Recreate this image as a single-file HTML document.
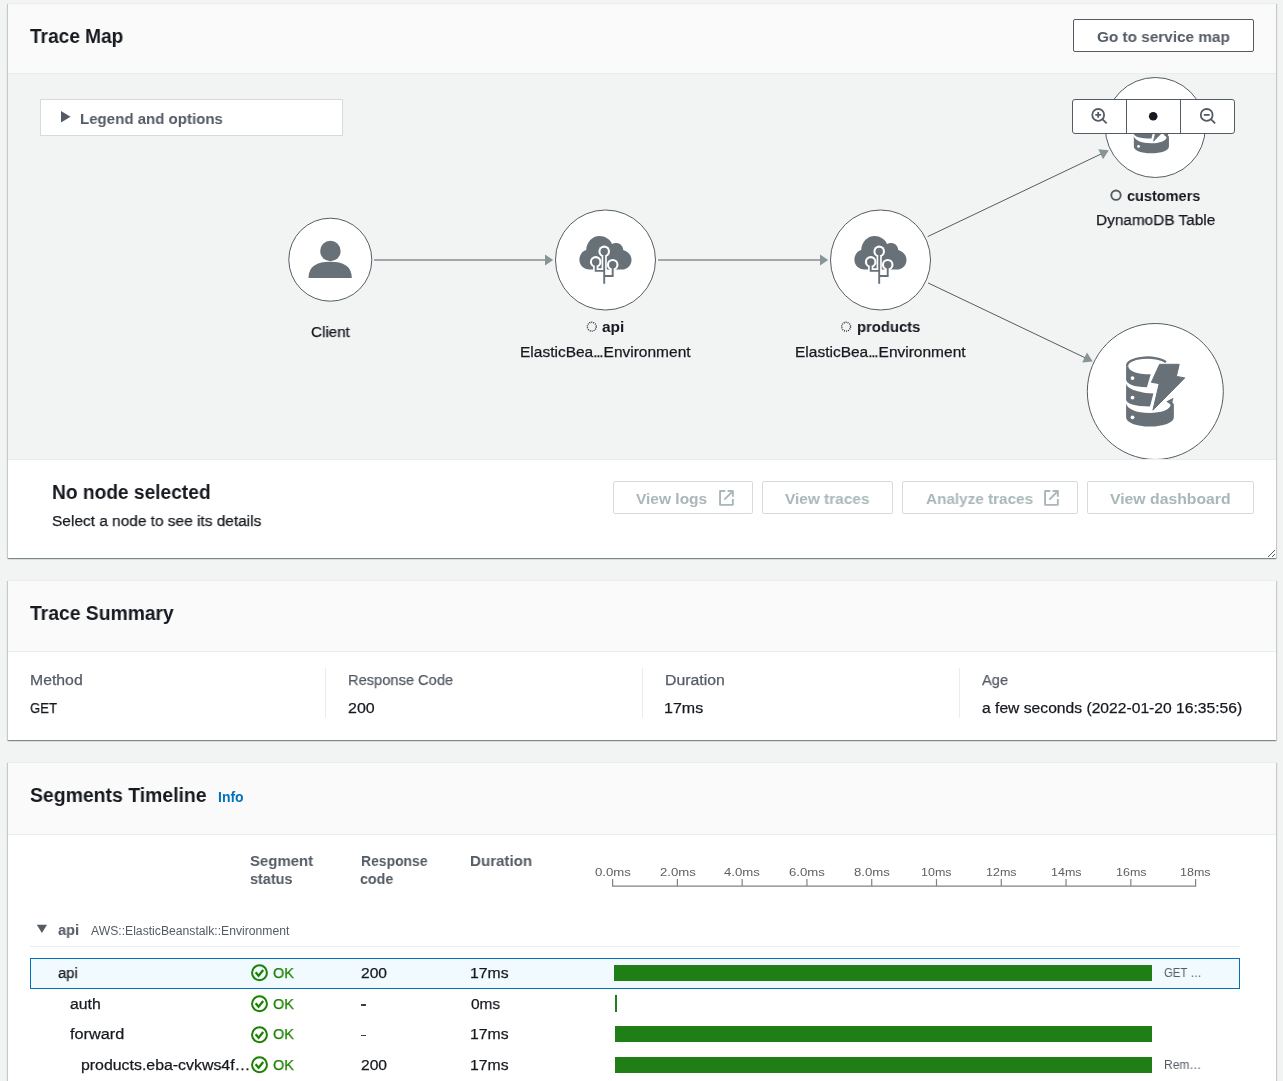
<!DOCTYPE html>
<html><head><meta charset="utf-8"><style>
html,body{margin:0;padding:0;}
body{width:1283px;height:1081px;overflow:hidden;position:relative;background:#f2f3f3;font-family:"Liberation Sans", sans-serif;}
.t{position:absolute;white-space:nowrap;line-height:0;will-change:transform;}
</style></head><body>
<div style="position:absolute;left:8px;top:3px;width:1268px;height:555px;background:#fff;box-sizing:border-box;box-shadow:0 1px 1px 0 rgba(0,28,36,.3),1px 1px 1px 0 rgba(0,28,36,.15),-1px 1px 1px 0 rgba(0,28,36,.15);border-top:1px solid #eaeded;"></div>
<div style="position:absolute;left:8px;top:4px;width:1268px;height:69px;background:#fafafa;border-bottom:1px solid #eaeded;"></div>
<div style="position:absolute;left:8px;top:74px;width:1268px;height:385px;background:#f2f3f3;"></div>
<div style="position:absolute;left:8px;top:459px;width:1268px;height:1px;background:#eaeded;"></div>
<div class="t" style="left:30.10px;top:35.90px;font-size:20px;font-weight:700;color:#16191f;transform:scaleX(0.9541);transform-origin:0 0;">Trace Map</div>
<div style="position:absolute;left:1073px;top:19px;width:181px;height:33px;box-sizing:border-box;border:1px solid #545b64;border-radius:2px;background:#fff;"></div>
<div class="t" style="left:1096.60px;top:37.30px;font-size:15.5px;font-weight:700;color:#545b64;transform:scaleX(0.9881);transform-origin:0 0;">Go to service map</div>
<div style="position:absolute;left:40px;top:99px;width:303px;height:37px;box-sizing:border-box;border:1px solid #d5dbdb;background:#fff;"></div>
<svg style="position:absolute;left:0;top:0" width="1283" height="1081"><path d="M61 111 L70.5 116.8 L61 122.6 Z" fill="#545b64"/></svg>
<div class="t" style="left:80.40px;top:118.80px;font-size:15.5px;font-weight:700;color:#545b64;transform:scaleX(0.9701);transform-origin:0 0;">Legend and options</div>
<svg style="position:absolute;left:0;top:0;overflow:hidden" width="1283" height="1081"><defs><g id="eb"><path fill="#687078" d="M14.6,37.6 C8.8,37.6 4.4,33.2 4.4,27.8 C4.4,22.8 7.6,19 11.2,18 C11.6,10.4 17.2,4.1 24.5,4.1 C30,4.1 34.8,7.2 37,11.9 C38.4,11.2 40,10.9 41.6,11 C45.4,11.2 48,14.2 48.2,18 C52.8,19.2 56.5,23 56.5,28 C56.5,33.4 52.2,37.6 47,37.6 Z"/><g fill="none" stroke="#fff" stroke-width="5.2" stroke-linejoin="miter"><path d="M29.2,19.4 V52"/><path d="M20.7,29.9 V38.9 H29.2"/><path d="M37.7,32.7 V44 H29.2"/></g><g fill="#fff"><circle cx="29.2" cy="19.4" r="5.8"/><circle cx="20.7" cy="29.9" r="5.8"/><circle cx="37.7" cy="32.7" r="5.8"/></g><g fill="none" stroke="#687078" stroke-width="1.9"><path d="M29.2,19.4 V51.8"/><path d="M20.7,29.9 V38.9 H29.2"/><path d="M37.7,32.7 V44 H29.2"/></g><g fill="#687078"><circle cx="29.2" cy="19.4" r="3.7"/><circle cx="20.7" cy="29.9" r="3.7"/><circle cx="37.7" cy="32.7" r="3.7"/></g></g><g id="ddb" fill="#687078"><path fill="none" stroke="#687078" stroke-width="2.3" d="M7.25,16.2 A20.25,7.85 0 0 1 45.9,12.2"/><path d="M6.1,16.2 L6.1,29.5 C6.1,33.8 14,37.2 26.9,37.2 L30.7,24.3 C16,24.3 8.4,20.8 8.4,16.2 Z"/><path d="M6.1,33.4 L6.1,49.5 C6.1,53.6 14.5,56.5 30,56.5 L33.4,43.6 C12,42 6.5,36.5 6.1,33.4 Z"/><path d="M6.1,53.2 C7,58.8 16,63 29.6,63 C41.1,63 50.5,59.4 50.5,55 C50.6,54 51.2,53 51.9,52.2 C52.9,52.6 53.85,53.6 53.85,55 L53.85,67.3 C53.85,72.8 43.3,76.6 29.9,76.6 C16.5,76.6 6.1,72.8 6.1,67.3 Z"/><path d="M46.3,51.5 L53.5,47.8 L51.6,55.2 Z"/><path stroke="#687078" stroke-width="1" stroke-linejoin="round" d="M39.6,14.3 L59.2,14.3 L56.4,26.4 L64.8,27.9 L32.9,60.2 L39.2,33.6 L31.4,32.3 Z"/><g fill="#fff"><circle cx="12.5" cy="28.1" r="1.9"/><circle cx="12.5" cy="47.6" r="1.9"/><circle cx="12.5" cy="67.3" r="1.9"/></g></g></defs><g><path d="M374,260 H546" stroke="#545b64" stroke-width="1" fill="none"/><path d="M545,254.4 L553.2,260 L545,265.6 Z" fill="#879596"/><path d="M658,260 H821" stroke="#545b64" stroke-width="1" fill="none"/><path d="M820,254.4 L828.2,260 L820,265.6 Z" fill="#879596"/><path d="M927.70,236.60 L1101.58,153.74" stroke="#545b64" stroke-width="1" fill="none"/><path d="M1108.80,150.30 L1103.04,159.14 L1098.31,149.21 Z" fill="#879596"/><path d="M928.00,282.90 L1085.48,357.96" stroke="#545b64" stroke-width="1" fill="none"/><path d="M1092.70,361.40 L1082.21,362.49 L1086.94,352.56 Z" fill="#879596"/><circle cx="330.3" cy="259.7" r="41.5" fill="#fff" stroke="#545b64" stroke-width="1"/><circle cx="330.4" cy="251" r="10.2" fill="#687078"/><path d="M308.5,278 C308.5,266 317,261.7 330.2,261.7 C343.4,261.7 351.8,266 351.8,278 Z" fill="#687078"/><circle cx="605.5" cy="260" r="50" fill="#fff" stroke="#545b64" stroke-width="1"/><use href="#eb" x="575" y="232"/><circle cx="880.5" cy="260" r="50" fill="#fff" stroke="#545b64" stroke-width="1"/><use href="#eb" x="850" y="232"/><circle cx="1155.3" cy="127.5" r="50" fill="#fff" stroke="#545b64" stroke-width="1"/><g transform="translate(1129.35,97) scale(0.735)"><use href="#ddb"/></g></g><clipPath id="mapclip"><rect x="0" y="74" width="1283" height="385"/></clipPath><g clip-path="url(#mapclip)"><circle cx="1155.3" cy="391.5" r="68" fill="#fff" stroke="#545b64" stroke-width="1"/><use href="#ddb" x="1120" y="350"/></g><circle cx="591.8" cy="326.7" r="4.45" fill="none" stroke="#16191f" stroke-width="1.35" stroke-dasharray="0.9 1.1"/><circle cx="846.1" cy="326.7" r="4.45" fill="none" stroke="#16191f" stroke-width="1.35" stroke-dasharray="0.9 1.1"/><circle cx="1116" cy="195.2" r="4.7" fill="none" stroke="#545b64" stroke-width="1.9"/></svg>
<div class="t" style="left:310.80px;top:331.70px;font-size:15.5px;font-weight:400;color:#16191f;transform:scaleX(0.9800);transform-origin:0 0;-webkit-text-stroke:0.25px currentColor;">Client</div>
<div class="t" style="left:602.10px;top:326.90px;font-size:15.5px;font-weight:700;color:#16191f;transform:scaleX(0.9818);transform-origin:0 0;">api</div>
<div class="t" style="left:520.40px;top:352.10px;font-size:15.5px;font-weight:400;color:#16191f;-webkit-text-stroke:0.25px currentColor;">ElasticBea<span style='letter-spacing:-1.3px'>..</span>.Environment</div>
<div class="t" style="left:856.80px;top:327.30px;font-size:15.5px;font-weight:700;color:#16191f;transform:scaleX(0.9545);transform-origin:0 0;">products</div>
<div class="t" style="left:795.40px;top:352.10px;font-size:15.5px;font-weight:400;color:#16191f;-webkit-text-stroke:0.25px currentColor;">ElasticBea<span style='letter-spacing:-1.3px'>..</span>.Environment</div>
<div class="t" style="left:1126.80px;top:195.80px;font-size:15.5px;font-weight:700;color:#16191f;transform:scaleX(0.9359);transform-origin:0 0;">customers</div>
<div class="t" style="left:1096.10px;top:219.80px;font-size:15.5px;font-weight:400;color:#16191f;transform:scaleX(0.9908);transform-origin:0 0;-webkit-text-stroke:0.25px currentColor;">DynamoDB Table</div>
<div style="position:absolute;left:1072px;top:99px;width:163px;height:35px;box-sizing:border-box;border:1px solid #545b64;border-radius:3px;background:#fff;"></div>
<div style="position:absolute;left:1126px;top:99px;width:1px;height:35px;background:#545b64;"></div>
<div style="position:absolute;left:1180px;top:99px;width:1px;height:35px;background:#545b64;"></div>
<svg style="position:absolute;left:0;top:0" width="1283" height="1081"><g fill="none" stroke="#545b64" stroke-width="1.8"><circle cx="1098.2" cy="114.9" r="5.9"/><path d="M1102.4,119.1 L1106.6,123.3"/><path d="M1095.3,114.9 H1101.1 M1098.2,112 V117.8"/><circle cx="1206.7" cy="114.9" r="5.9"/><path d="M1210.9,119.1 L1215.1,123.3"/><path d="M1203.8,114.9 H1209.6"/></g><circle cx="1153.2" cy="116.3" r="4.3" fill="#16191f"/></svg>
<div class="t" style="left:52.30px;top:491.80px;font-size:20px;font-weight:700;color:#16191f;transform:scaleX(0.9576);transform-origin:0 0;">No node selected</div>
<div class="t" style="left:52.30px;top:520.70px;font-size:15.5px;font-weight:400;color:#16191f;transform:scaleX(0.9957);transform-origin:0 0;-webkit-text-stroke:0.25px currentColor;">Select a node to see its details</div>
<div style="position:absolute;left:613px;top:481px;width:140px;height:33px;box-sizing:border-box;border:1px solid #d5dbdb;border-radius:2px;background:#fff;"></div>
<div class="t" style="left:636.20px;top:498.80px;font-size:15.5px;font-weight:700;color:#aab7b8;">View logs</div>
<div style="position:absolute;left:762px;top:481px;width:131px;height:33px;box-sizing:border-box;border:1px solid #d5dbdb;border-radius:2px;background:#fff;"></div>
<div class="t" style="left:785.20px;top:498.80px;font-size:15.5px;font-weight:700;color:#aab7b8;transform:scaleX(0.9929);transform-origin:0 0;">View traces</div>
<div style="position:absolute;left:902px;top:481px;width:176px;height:33px;box-sizing:border-box;border:1px solid #d5dbdb;border-radius:2px;background:#fff;"></div>
<div class="t" style="left:925.50px;top:498.80px;font-size:15.5px;font-weight:700;color:#aab7b8;transform:scaleX(0.9862);transform-origin:0 0;">Analyze traces</div>
<div style="position:absolute;left:1087px;top:481px;width:167px;height:33px;box-sizing:border-box;border:1px solid #d5dbdb;border-radius:2px;background:#fff;"></div>
<div class="t" style="left:1110.00px;top:498.80px;font-size:15.5px;font-weight:700;color:#aab7b8;transform:scaleX(1.0169);transform-origin:0 0;">View dashboard</div>
<svg style="position:absolute;left:719px;top:490px" width="16" height="16" viewBox="0 0 16 16"><g fill="none" stroke="#aab7b8" stroke-width="1.9" stroke-linejoin="round"><path d="M6.3,1.05 H1.05 V14.85 H13.85 V9"/><path d="M8.6,1.05 H13.85 V6.7"/><path d="M13.6,1.3 L5.3,9.6"/></g></svg>
<svg style="position:absolute;left:1044px;top:490px" width="16" height="16" viewBox="0 0 16 16"><g fill="none" stroke="#aab7b8" stroke-width="1.9" stroke-linejoin="round"><path d="M6.3,1.05 H1.05 V14.85 H13.85 V9"/><path d="M8.6,1.05 H13.85 V6.7"/><path d="M13.6,1.3 L5.3,9.6"/></g></svg>
<svg style="position:absolute;left:1264px;top:546px" width="12" height="12"><g stroke="#545b64" stroke-width="1"><path d="M4,11 L11,4"/><path d="M8,11 L11,8"/></g></svg>
<div style="position:absolute;left:8px;top:580px;width:1268px;height:160px;background:#fff;box-sizing:border-box;box-shadow:0 1px 1px 0 rgba(0,28,36,.3),1px 1px 1px 0 rgba(0,28,36,.15),-1px 1px 1px 0 rgba(0,28,36,.15);border-top:1px solid #eaeded;"></div>
<div style="position:absolute;left:8px;top:581px;width:1268px;height:71px;background:#fafafa;border-bottom:1px solid #eaeded;box-sizing:border-box;"></div>
<div class="t" style="left:30.10px;top:613.20px;font-size:20px;font-weight:700;color:#16191f;transform:scaleX(0.9651);transform-origin:0 0;">Trace Summary</div>
<div class="t" style="left:30.10px;top:680.00px;font-size:15.5px;font-weight:400;color:#545b64;transform:scaleX(1.0192);transform-origin:0 0;-webkit-text-stroke:0.25px currentColor;">Method</div>
<div class="t" style="left:30.10px;top:708.00px;font-size:15.5px;font-weight:400;color:#16191f;transform:scaleX(0.8469);transform-origin:0 0;-webkit-text-stroke:0.25px currentColor;">GET</div>
<div class="t" style="left:347.70px;top:680.00px;font-size:15.5px;font-weight:400;color:#545b64;transform:scaleX(0.9459);transform-origin:0 0;-webkit-text-stroke:0.25px currentColor;">Response Code</div>
<div class="t" style="left:347.70px;top:708.00px;font-size:15.5px;font-weight:400;color:#16191f;transform:scaleX(1.0308);transform-origin:0 0;-webkit-text-stroke:0.25px currentColor;">200</div>
<div class="t" style="left:665.00px;top:680.00px;font-size:15.5px;font-weight:400;color:#545b64;transform:scaleX(1.0203);transform-origin:0 0;-webkit-text-stroke:0.25px currentColor;">Duration</div>
<div class="t" style="left:663.97px;top:708.00px;font-size:15.5px;font-weight:400;color:#16191f;transform:scaleX(1.0324);transform-origin:0 0;-webkit-text-stroke:0.25px currentColor;">17ms</div>
<div class="t" style="left:981.90px;top:680.00px;font-size:15.5px;font-weight:400;color:#545b64;transform:scaleX(0.9464);transform-origin:0 0;-webkit-text-stroke:0.25px currentColor;">Age</div>
<div class="t" style="left:981.90px;top:708.00px;font-size:15.5px;font-weight:400;color:#16191f;transform:scaleX(1.0101);transform-origin:0 0;-webkit-text-stroke:0.25px currentColor;">a few seconds (2022-01-20 16:35:56)</div>
<div style="position:absolute;left:325px;top:668px;width:1px;height:50px;background:#eaeded;"></div>
<div style="position:absolute;left:642px;top:668px;width:1px;height:50px;background:#eaeded;"></div>
<div style="position:absolute;left:959px;top:668px;width:1px;height:50px;background:#eaeded;"></div>
<div style="position:absolute;left:8px;top:762px;width:1268px;height:338px;background:#fff;box-sizing:border-box;box-shadow:0 1px 1px 0 rgba(0,28,36,.3),1px 1px 1px 0 rgba(0,28,36,.15),-1px 1px 1px 0 rgba(0,28,36,.15);border-top:1px solid #eaeded;"></div>
<div style="position:absolute;left:8px;top:763px;width:1268px;height:72px;background:#fafafa;border-bottom:1px solid #eaeded;box-sizing:border-box;"></div>
<div class="t" style="left:30.30px;top:794.80px;font-size:20px;font-weight:700;color:#16191f;transform:scaleX(0.9709);transform-origin:0 0;">Segments Timeline</div>
<div class="t" style="left:217.70px;top:796.80px;font-size:14px;font-weight:700;color:#0073bb;transform:scaleX(0.9923);transform-origin:0 0;">Info</div>
<div class="t" style="left:250.00px;top:861.20px;font-size:15.5px;font-weight:700;color:#545b64;transform:scaleX(0.9636);transform-origin:0 0;">Segment</div>
<div class="t" style="left:249.70px;top:878.70px;font-size:15.5px;font-weight:700;color:#545b64;transform:scaleX(0.9304);transform-origin:0 0;">status</div>
<div class="t" style="left:360.50px;top:861.20px;font-size:15.5px;font-weight:700;color:#545b64;transform:scaleX(0.8986);transform-origin:0 0;">Response</div>
<div class="t" style="left:359.90px;top:878.70px;font-size:15.5px;font-weight:700;color:#545b64;transform:scaleX(0.9222);transform-origin:0 0;">code</div>
<div class="t" style="left:470.20px;top:861.20px;font-size:15.5px;font-weight:700;color:#545b64;transform:scaleX(0.9750);transform-origin:0 0;">Duration</div>
<svg style="position:absolute;left:0;top:0" width="1283" height="1081"><g stroke="#828282" stroke-width="1.2" fill="none"><path d="M612.6,879 V886.1 H1195.6 V879"/><path d="M677.38,879 V886.1"/><path d="M742.16,879 V886.1"/><path d="M806.94,879 V886.1"/><path d="M871.72,879 V886.1"/><path d="M936.50,879 V886.1"/><path d="M1001.28,879 V886.1"/><path d="M1066.06,879 V886.1"/><path d="M1130.84,879 V886.1"/></g></svg>
<div class="t" style="left:594.85px;top:871.70px;font-size:11.5px;font-weight:400;color:#5f5f5f;transform:scaleX(1.1452);transform-origin:0 0;">0.0ms</div>
<div class="t" style="left:659.63px;top:871.70px;font-size:11.5px;font-weight:400;color:#5f5f5f;transform:scaleX(1.1452);transform-origin:0 0;">2.0ms</div>
<div class="t" style="left:724.41px;top:871.70px;font-size:11.5px;font-weight:400;color:#5f5f5f;transform:scaleX(1.1452);transform-origin:0 0;">4.0ms</div>
<div class="t" style="left:789.19px;top:871.70px;font-size:11.5px;font-weight:400;color:#5f5f5f;transform:scaleX(1.1452);transform-origin:0 0;">6.0ms</div>
<div class="t" style="left:853.97px;top:871.70px;font-size:11.5px;font-weight:400;color:#5f5f5f;transform:scaleX(1.1452);transform-origin:0 0;">8.0ms</div>
<div class="t" style="left:921.30px;top:871.70px;font-size:11.5px;font-weight:400;color:#5f5f5f;transform:scaleX(1.0857);transform-origin:0 0;">10ms</div>
<div class="t" style="left:986.08px;top:871.70px;font-size:11.5px;font-weight:400;color:#5f5f5f;transform:scaleX(1.0857);transform-origin:0 0;">12ms</div>
<div class="t" style="left:1050.86px;top:871.70px;font-size:11.5px;font-weight:400;color:#5f5f5f;transform:scaleX(1.0857);transform-origin:0 0;">14ms</div>
<div class="t" style="left:1115.64px;top:871.70px;font-size:11.5px;font-weight:400;color:#5f5f5f;transform:scaleX(1.0857);transform-origin:0 0;">16ms</div>
<div class="t" style="left:1180.42px;top:871.70px;font-size:11.5px;font-weight:400;color:#5f5f5f;transform:scaleX(1.0857);transform-origin:0 0;">18ms</div>
<svg style="position:absolute;left:36px;top:924px" width="12" height="10"><path d="M0.8,0.8 H11 L5.9,9 Z" fill="#545b64"/></svg>
<div class="t" style="left:57.70px;top:929.70px;font-size:15.5px;font-weight:700;color:#545b64;transform:scaleX(0.9455);transform-origin:0 0;">api</div>
<div class="t" style="left:90.90px;top:930.70px;font-size:12px;font-weight:400;color:#545b64;transform:scaleX(1.0143);transform-origin:0 0;">AWS::ElasticBeanstalk::Environment</div>
<div style="position:absolute;left:30px;top:946px;width:1210px;height:1px;background:#eaeded;"></div>
<div style="position:absolute;left:30px;top:958px;width:1210px;height:31px;box-sizing:border-box;border:1px solid #0073bb;background:#f1faff;"></div>
<div class="t" style="left:58.40px;top:972.70px;font-size:15.5px;font-weight:400;color:#16191f;transform:scaleX(0.9571);transform-origin:0 0;-webkit-text-stroke:0.25px currentColor;">api</div>
<svg style="position:absolute;left:250px;top:963.20px" width="19" height="19" viewBox="0 0 19 19"><circle cx="9.5" cy="9.7" r="7.45" fill="none" stroke="#1d8102" stroke-width="2"/><path d="M5.6,9.2 L8.6,12.7 L13.2,7.1" fill="none" stroke="#1d8102" stroke-width="2.3"/></svg>
<div class="t" style="left:273.30px;top:972.70px;font-size:15.5px;font-weight:400;color:#1d8102;transform:scaleX(0.9364);transform-origin:0 0;-webkit-text-stroke:0.25px currentColor;">OK</div>
<div class="t" style="left:360.90px;top:972.70px;font-size:15.5px;font-weight:400;color:#16191f;transform:scaleX(1.0077);transform-origin:0 0;-webkit-text-stroke:0.25px currentColor;">200</div>
<div class="t" style="left:470.08px;top:972.70px;font-size:15.5px;font-weight:400;color:#16191f;transform:scaleX(1.0162);transform-origin:0 0;-webkit-text-stroke:0.25px currentColor;">17ms</div>
<div style="position:absolute;left:614px;top:964.5px;width:538px;height:16.40000000000009px;background:#1f7f16;"></div>
<div class="t" style="left:1163.80px;top:972.70px;font-size:12.3px;font-weight:400;color:#545b64;transform:scaleX(0.9250);transform-origin:0 0;">GET …</div>
<div class="t" style="left:69.70px;top:1003.60px;font-size:15.5px;font-weight:400;color:#16191f;transform:scaleX(1.0200);transform-origin:0 0;-webkit-text-stroke:0.25px currentColor;">auth</div>
<svg style="position:absolute;left:250px;top:994.10px" width="19" height="19" viewBox="0 0 19 19"><circle cx="9.5" cy="9.7" r="7.45" fill="none" stroke="#1d8102" stroke-width="2"/><path d="M5.6,9.2 L8.6,12.7 L13.2,7.1" fill="none" stroke="#1d8102" stroke-width="2.3"/></svg>
<div class="t" style="left:273.30px;top:1003.60px;font-size:15.5px;font-weight:400;color:#1d8102;transform:scaleX(0.9364);transform-origin:0 0;-webkit-text-stroke:0.25px currentColor;">OK</div>
<div style="position:absolute;left:361px;top:1004.2px;width:5px;height:1.3999999999999773px;background:#3a3f45;"></div>
<div class="t" style="left:470.70px;top:1003.60px;font-size:15.5px;font-weight:400;color:#16191f;transform:scaleX(0.9931);transform-origin:0 0;-webkit-text-stroke:0.25px currentColor;">0ms</div>
<div style="position:absolute;left:614.7px;top:995.4px;width:2.0px;height:16.40000000000009px;background:#1f7f16;"></div>
<div class="t" style="left:69.70px;top:1034.10px;font-size:15.5px;font-weight:400;color:#16191f;transform:scaleX(1.0500);transform-origin:0 0;-webkit-text-stroke:0.25px currentColor;">forward</div>
<svg style="position:absolute;left:250px;top:1024.60px" width="19" height="19" viewBox="0 0 19 19"><circle cx="9.5" cy="9.7" r="7.45" fill="none" stroke="#1d8102" stroke-width="2"/><path d="M5.6,9.2 L8.6,12.7 L13.2,7.1" fill="none" stroke="#1d8102" stroke-width="2.3"/></svg>
<div class="t" style="left:273.30px;top:1034.10px;font-size:15.5px;font-weight:400;color:#1d8102;transform:scaleX(0.9364);transform-origin:0 0;-webkit-text-stroke:0.25px currentColor;">OK</div>
<div style="position:absolute;left:361px;top:1034.6999999999998px;width:5px;height:1.400000000000091px;background:#3a3f45;"></div>
<div class="t" style="left:470.08px;top:1034.10px;font-size:15.5px;font-weight:400;color:#16191f;transform:scaleX(1.0162);transform-origin:0 0;-webkit-text-stroke:0.25px currentColor;">17ms</div>
<div style="position:absolute;left:615.2px;top:1025.8999999999999px;width:536.8px;height:16.40000000000009px;background:#1f7f16;"></div>
<div class="t" style="left:80.70px;top:1064.80px;font-size:15.5px;font-weight:400;color:#16191f;transform:scaleX(1.0244);transform-origin:0 0;-webkit-text-stroke:0.25px currentColor;">products.eba-cvkws4f…</div>
<svg style="position:absolute;left:250px;top:1055.30px" width="19" height="19" viewBox="0 0 19 19"><circle cx="9.5" cy="9.7" r="7.45" fill="none" stroke="#1d8102" stroke-width="2"/><path d="M5.6,9.2 L8.6,12.7 L13.2,7.1" fill="none" stroke="#1d8102" stroke-width="2.3"/></svg>
<div class="t" style="left:273.30px;top:1064.80px;font-size:15.5px;font-weight:400;color:#1d8102;transform:scaleX(0.9364);transform-origin:0 0;-webkit-text-stroke:0.25px currentColor;">OK</div>
<div class="t" style="left:360.90px;top:1064.80px;font-size:15.5px;font-weight:400;color:#16191f;transform:scaleX(1.0077);transform-origin:0 0;-webkit-text-stroke:0.25px currentColor;">200</div>
<div class="t" style="left:470.08px;top:1064.80px;font-size:15.5px;font-weight:400;color:#16191f;transform:scaleX(1.0162);transform-origin:0 0;-webkit-text-stroke:0.25px currentColor;">17ms</div>
<div style="position:absolute;left:615.2px;top:1056.6px;width:536.8px;height:16.40000000000009px;background:#1f7f16;"></div>
<div class="t" style="left:1163.80px;top:1064.80px;font-size:12.3px;font-weight:400;color:#545b64;transform:scaleX(0.9757);transform-origin:0 0;">Rem…</div>
</body></html>
